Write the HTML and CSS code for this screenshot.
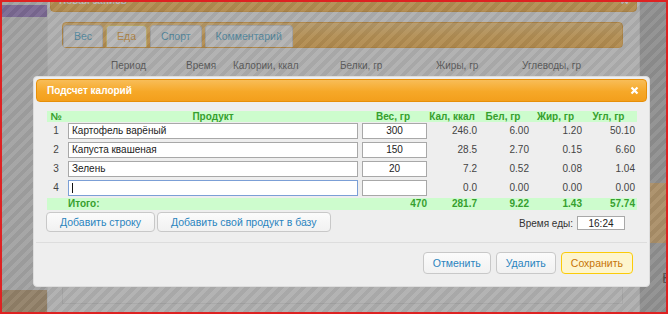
FILE: index.html
```html
<!DOCTYPE html>
<html lang="ru">
<head>
    <meta charset="UTF-8">
    <title>Подсчет калорий</title>
    <link rel="stylesheet" href="styles.css">
</head>
<body>
<div class="screen">
    <div class="page">
        <div class="page-left">
            <div class="page-nav"></div>
            <div class="page-foot"></div>
        </div>
        <div class="page-main"></div>
        <div class="page-right">
            <div class="page-banner"></div>
            <div class="page-letter">В</div>
        </div>
    </div>

    <!-- dialog behind the modal -->
    <div class="dialog dialog-back">
        <div class="dialog-title dialog-title-back">
            <span>Новая запись</span>
            <svg class="close-icon" viewBox="0 0 9 9"><path d="M1.5 1.5l6 6M7.5 1.5l-6 6" stroke="#fff" stroke-width="2.2"/></svg>
        </div>
        <div class="entry-body">
            <ul class="tabs">
                <li>Вес</li>
                <li class="active">Еда</li>
                <li>Спорт</li>
                <li>Комментарий</li>
            </ul>
            <div class="log-head">
                <span class="lh-period">Период</span><span class="lh-time">Время</span><span class="lh-kcal">Калории, ккал</span><span class="lh-prot">Белки, гр</span><span class="lh-fat">Жиры, гр</span><span>Углеводы, гр</span>
            </div>
            <div class="log-box"></div>
        </div>
    </div>

    <div class="overlay"></div>

    <div class="dialog dialog-front">
        <div class="dialog-title">
            <span>Подсчет калорий</span>
            <svg class="close-icon" viewBox="0 0 9 9"><path d="M1.5 1.5l6 6M7.5 1.5l-6 6" stroke="#fff" stroke-width="2.2"/></svg>
        </div>
        <div class="calc-body">
            <table class="calc">
                <colgroup>
                    <col style="width:18px"><col style="width:296px"><col style="width:68px"><col style="width:50px"><col style="width:52px"><col style="width:53px"><col style="width:53px">
                </colgroup>
                <thead>
                    <tr>
                        <th>№</th>
                        <th>Продукт</th>
                        <th class="num">Вес, гр</th>
                        <th class="num">Кал, ккал</th>
                        <th class="num">Бел, гр</th>
                        <th class="num">Жир, гр</th>
                        <th class="num">Угл, гр</th>
                    </tr>
                </thead>
                <tbody>
                    <tr>
                        <td class="n">1</td>
                        <td><input class="product" value="Картофель варёный"></td>
                        <td><input class="weight" value="300"></td>
                        <td class="val">246.0</td><td class="val">6.00</td><td class="val">1.20</td><td class="val">50.10</td>
                    </tr>
                    <tr>
                        <td class="n">2</td>
                        <td><input class="product" value="Капуста квашеная"></td>
                        <td><input class="weight" value="150"></td>
                        <td class="val">28.5</td><td class="val">2.70</td><td class="val">0.15</td><td class="val">6.60</td>
                    </tr>
                    <tr>
                        <td class="n">3</td>
                        <td><input class="product" value="Зелень"></td>
                        <td><input class="weight" value="20"></td>
                        <td class="val">7.2</td><td class="val">0.52</td><td class="val">0.08</td><td class="val">1.04</td>
                    </tr>
                    <tr>
                        <td class="n">4</td>
                        <td class="editing"><input class="product focused" value=""><span class="caret"></span></td>
                        <td><input class="weight" value=""></td>
                        <td class="val">0.0</td><td class="val">0.00</td><td class="val">0.00</td><td class="val">0.00</td>
                    </tr>
                </tbody>
                <tfoot>
                    <tr class="total">
                        <td></td>
                        <td class="total-label">Итого:</td>
                        <td class="val">470</td><td class="val">281.7</td><td class="val">9.22</td><td class="val">1.43</td><td class="val">57.74</td>
                    </tr>
                </tfoot>
            </table>

            <div class="calc-actions">
                <div class="calc-add">
                    <button class="btn">Добавить строку</button>
                    <button class="btn">Добавить свой продукт в базу</button>
                </div>
                <label class="meal-time">Время еды: <input value="16:24"></label>
            </div>
        </div>
        <div class="dialog-buttons">
            <button class="btn">Отменить</button>
            <button class="btn">Удалить</button>
            <button class="btn btn-hot">Сохранить</button>
        </div>
    </div>
</div>
</body>
</html>
```

FILE: styles.css
```css
* {
    margin: 0;
    padding: 0;
    box-sizing: border-box;
}

body {
    font-family: "Liberation Sans", Arial, sans-serif;
    font-size: 10px;
    color: #333;
    background: #fff;
}

.screen {
    position: relative;
    width: 668px;
    height: 314px;
    overflow: hidden;
}

.screen::after {
    content: "";
    position: absolute;
    inset: 0;
    border: 2px solid #de2222;
    z-index: 5;
}

/* page under everything */
.page {
    display: flex;
    height: 100%;
    background: #d2d2d2;
}

.page-left {
    width: 47px;
    display: flex;
    flex-direction: column;
    justify-content: space-between;
    padding: 5px 0 2px;
}

.page-nav {
    height: 12px;
    background: #7d56b0;
}

.page-foot {
    height: 22px;
    background: #b08a55;
}

.page-main {
    flex: 1;
}

.page-right {
    width: 29px;
    background: #aaaaaa;
    display: flex;
    flex-direction: column;
    align-items: flex-end;
    padding-top: 183px;
}

.page-banner {
    width: 22px;
    height: 60px;
    background: #e4a955;
}

.page-letter {
    margin: 27px -4px 0 0;
    font-size: 15px;
    line-height: 15px;
    color: #222;
}

/* dialogs */
.dialog {
    position: absolute;
    background: #eee;
    border: 1px solid #ddd;
    border-radius: 4px;
    padding: 2px;
}

.dialog-back {
    left: 47px;
    top: -14px;
    width: 593px;
    height: 340px;
}

.dialog-front {
    left: 33px;
    top: 76px;
    width: 617px;
    z-index: 3;
}

.dialog-title {
    display: flex;
    align-items: center;
    justify-content: space-between;
    height: 23px;
    padding: 0 7px 0 10px;
    border: 1px solid #e78f08;
    border-radius: 4px;
    background: linear-gradient(#f8bd58, #f6a828 55%, #f39f1c);
    color: #fff;
    font-weight: bold;
}

.dialog-title-back {
    padding-left: 8px;
}

.close-icon {
    width: 9px;
    height: 9px;
}

.overlay {
    position: absolute;
    inset: 0;
    z-index: 2;
    background: repeating-linear-gradient(135deg, rgba(112,112,112,0.56) 0 4px, rgba(132,132,132,0.56) 4px 8px);
}

/* entry dialog content */
.entry-body {
    padding: 10px 14px 0 12px;
}

.tabs {
    display: flex;
    gap: 3px;
    height: 26px;
    padding-top: 2px;
    list-style: none;
    border: 1px solid #e78f08;
    border-radius: 4px;
    background: linear-gradient(#f8bd58, #f6a828 55%, #f39f1c);
}

.tabs li {
    height: 22px;
    line-height: 21px;
    padding: 0 10px;
    font-size: 10.5px;
    color: #1c94c4;
    background: #f6f6f6;
    border: 1px solid #ccc;
    border-bottom: none;
    border-radius: 4px 4px 0 0;
}

.tabs li.active {
    background: #fff;
    border-color: #fbd850;
    color: #eb8f00;
}

.log-head {
    margin-top: 12px;
    line-height: 12px;
    padding-left: 49px;
    white-space: nowrap;
}

.log-head span {
    display: inline-block;
}

.lh-period { width: 75px; }
.lh-time { width: 47px; }
.lh-kcal { width: 107px; }
.lh-prot { width: 96px; }
.lh-fat { width: 86px; }

.log-box {
    margin-top: 10px;
    height: 222px;
    border: 1px solid #d8d8d8;
    background: #f0f0f0;
}

/* calorie calculator */
.calc-body {
    padding: 9px 10px 10px 11px;
}

.calc {
    width: 590px;
    border-collapse: collapse;
    table-layout: fixed;
}

.calc th {
    height: 11px;
    line-height: 11px;
    padding: 0;
    background: #cdfccd;
    color: #36a02e;
    font-weight: bold;
    text-align: center;
}

.calc th.num {
    padding-right: 4px;
}

.calc td {
    height: 19px;
    padding: 1px 0 2px;
    line-height: 16px;
    vertical-align: top;
    text-align: right;
    color: #444;
}

.calc td.n {
    text-align: center;
}

.calc td.val {
    padding-right: 2px;
}

.calc input {
    display: block;
    height: 16px;
    padding: 0 3px;
    border: 1px solid #a8a8a8;
    background: #fff;
    font: inherit;
    color: #222;
    outline: none;
}

.calc .product {
    width: 290px;
    margin-left: 3px;
}

.calc .weight {
    width: 65px;
    margin-left: 1px;
    text-align: center;
}

.calc .focused {
    border-color: #7b9fd6;
}

.calc td.editing {
    position: relative;
}

.caret {
    position: absolute;
    left: 7px;
    top: 4px;
    width: 1px;
    height: 10px;
    background: #111;
}

.calc .total td {
    height: 12px;
    padding-top: 0;
    padding-bottom: 0;
    line-height: 12px;
    background: #cdfccd;
    color: #36a02e;
    font-weight: bold;
}

.calc .total td.total-label {
    text-align: left;
    padding-left: 3px;
}

.calc-actions {
    display: flex;
    justify-content: space-between;
    align-items: center;
    margin: 2px 12px 0 -1px;
}

.calc-add {
    display: flex;
    gap: 2px;
}

.btn {
    height: 20px;
    padding: 0 13px;
    border: 1px solid #c8c8c8;
    border-radius: 4px;
    background: linear-gradient(#fbfbfb, #f1f1f1);
    color: #2a84be;
    font-family: inherit;
    font-size: 10.5px;
}

.meal-time {
    display: flex;
    align-items: center;
    gap: 4px;
    margin-top: 2px;
    color: #333;
}

.meal-time input {
    width: 48px;
    height: 14px;
    border: 1px solid #a8a8a8;
    background: #fff;
    font: inherit;
    color: #222;
    text-align: center;
}

.dialog-buttons {
    display: flex;
    justify-content: flex-end;
    gap: 5px;
    padding: 9px 14px 10px;
    border-top: 1px solid #ddd;
}

.dialog-buttons .btn {
    height: 22px;
    padding: 0 9px;
}

.btn-hot {
    background: #fdf5ce;
    border-color: #fbcb09;
    color: #c77405;
}
```
